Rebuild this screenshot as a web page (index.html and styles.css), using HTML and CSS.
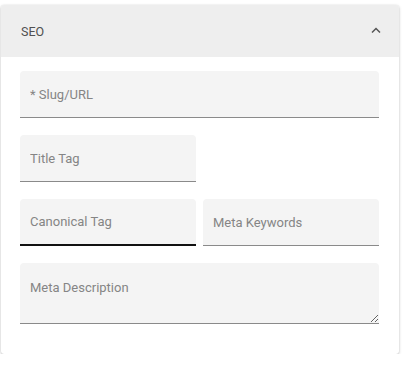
FILE: index.html
```html
<!DOCTYPE html>
<html lang="en">
<head>
    <meta charset="UTF-8">
    <meta name="viewport" content="width=device-width, initial-scale=1.0">
    <title>SEO</title>
    <link rel="stylesheet" href="styles.css">
</head>
<body>

<div class="panel">
    <div class="panel-header">
        <span class="panel-title">SEO</span>
        <svg class="chevron" width="10" height="6" viewBox="0 0 10 6">
            <path d="M1 5.5 L5 1.5 L9 5.5" fill="none" stroke="#555" stroke-width="1.5"/>
        </svg>
    </div>

    <div class="panel-body">
        <div class="field full">
            <input type="text" placeholder="* Slug/URL">
        </div>
        <div class="field">
            <input type="text" placeholder="Title Tag">
        </div>
        <div class="field-spacer"></div>
        <div class="field focused">
            <input type="text" placeholder="Canonical Tag">
        </div>
        <div class="field">
            <input type="text" placeholder="Meta Keywords">
        </div>
        <div class="field full area">
            <textarea placeholder="Meta Description"></textarea>
        </div>
    </div>
</div>

</body>
</html>
```

FILE: styles.css
```css
body {
    margin: 0;
    padding: 5px 7px 0 1px;
    font-family: Roboto, 'Liberation Sans', sans-serif;
    background-color: #fff;
}

/* kartu utama */
.panel {
    width: 398px;
    background-color: #fff;
    border-radius: 3px;
    box-shadow: 0 1px 3px rgba(0, 0, 0, 0.25), 0 0 1px rgba(0, 0, 0, 0.12);
    overflow: hidden;
}

.panel-header {
    height: 52px;
    display: flex;
    align-items: center;
    justify-content: space-between;
    padding: 0 19px 0 20px;
    background-color: #eeeeee;
}

.panel-title {
    font-size: 12.5px;
    color: #505050;
}

.chevron {
    margin-right: -1px;
    margin-top: -3px;
}

.panel-body {
    display: grid;
    grid-template-columns: 176px 176px;
    column-gap: 7px;
    row-gap: 17px;
    padding: 14px 20px 30px 19px;
}

.field {
    height: 46px;
    background-color: #f4f4f4;
    border-radius: 4px 4px 0 0;
    border-bottom: 1px solid #8a8a8a;
}

.field.full {
    grid-column: 1 / 3;
}

.field.focused {
    border-bottom: 2px solid #111;
    height: 45px;
}

.field.area {
    height: 60px;
}

input, textarea {
    width: 100%;
    height: 100%;
    box-sizing: border-box;
    border: none;
    outline: none;
    background: transparent;
    font-family: Roboto, 'Liberation Sans', sans-serif;
    font-size: 13px;
    color: #333;
    padding: 0 10px 0 10px;
}

textarea {
    padding-top: 17px;
    resize: vertical;
}

input::placeholder, textarea::placeholder {
    color: #858585;
}
```
